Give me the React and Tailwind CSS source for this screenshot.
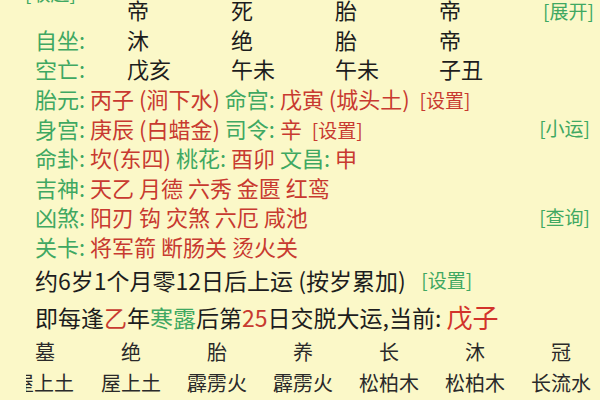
import React from "react";

const font = { fontFamily: '"Noto Sans CJK SC", "Noto Sans", sans-serif' };

const columns = [
  { label: "", cells: ["帝", "死", "胎", "帝"], right: "[展开]" },
  { label: "自坐:", cells: ["沐", "绝", "胎", "帝"] },
  { label: "空亡:", cells: ["戊亥", "午未", "午未", "子丑"] },
];

const bottom = [
  ["墓", "屋上土"],
  ["绝", "屋上土"],
  ["胎", "霹雳火"],
  ["养", "霹雳火"],
  ["长", "松柏木"],
  ["沐", "松柏木"],
  ["冠", "长流水"],
];

function Label({ children }) {
  return <span className="text-[#3fa862]">{children}</span>;
}

function Red({ children }) {
  return <span className="text-[#c83a30]">{children}</span>;
}

function Link({ children, red }) {
  return (
    <span className={`text-[19px] whitespace-nowrap ${red ? "text-[#c83a30]" : "text-[#3fa862]"}`}>{children}</span>
  );
}

function Row({ children, right }) {
  return (
    <div className="flex items-center h-[29.6px] pl-[35px] pr-[10px]">
      <div className="flex-1 whitespace-nowrap">{children}</div>
      {right && <Link>{right}</Link>}
    </div>
  );
}

export default function App() {
  return (
    <div className="w-[600px] h-[400px] overflow-hidden bg-[#fbf8c8] text-[22px] text-[#1d1d1d]" style={font}>
      <div className="mt-[-5px]">
        {columns.map((r, i) => (
          <div key={i} className="flex items-center h-[29.6px] pl-[35px] pr-[10px]">
            <div className="w-[92px] shrink-0 relative whitespace-nowrap">
              {i === 0 ? (
                <span className="relative -top-[18px] -left-[10px] text-[19px] text-[#3fa862]">[收起]</span>
              ) : (
                <Label>{r.label}</Label>
              )}
            </div>
            {r.cells.map((c, j) => (
              <div key={j} className="w-[104px] shrink-0">
                {c}
              </div>
            ))}
            <div className="flex-1 text-right whitespace-nowrap">{r.right && <Link>{r.right}</Link>}</div>
          </div>
        ))}
        <Row>
          <Label>胎元:</Label> <Red>丙子 (涧下水)</Red> <Label>命宫:</Label> <Red>戊寅 (城头土)</Red>&nbsp;&nbsp;
          <Link red>[设置]</Link>
        </Row>
        <Row right="[小运]">
          <Label>身宫:</Label> <Red>庚辰 (白蜡金)</Red> <Label>司令:</Label> <Red>辛</Red>&nbsp;&nbsp;
          <Link red>[设置]</Link>
        </Row>
        <Row>
          <Label>命卦:</Label> <Red>坎(东四)</Red> <Label>桃花:</Label> <Red>酉卯</Red>{" "}
          <Label>文昌:</Label> <Red>申</Red>
        </Row>
        <Row>
          <Label>吉神:</Label> <Red>天乙 月德 六秀 金匮 红鸾</Red>
        </Row>
        <Row right="[查询]">
          <Label>凶煞:</Label> <Red>阳刃 钩 灾煞 六厄 咸池</Red>
        </Row>
        <Row>
          <Label>关卡:</Label> <Red>将军箭 断肠关 烫火关</Red>
        </Row>
      </div>
      <div className="flex items-center h-[37px] pl-[35px] whitespace-nowrap text-[23px]">
        约6岁1个月零12日后上运 (按岁累加)&nbsp;&nbsp;&nbsp;<Link>[设置]</Link>
      </div>
      <div className="flex items-center h-[37px] pl-[35px] whitespace-nowrap text-[23px]">
        即每逢<Red>乙</Red>年<Label>寒露</Label>后第<Red>25</Red>日交脱大运,当前:&nbsp;
        <span className="text-[26px] text-[#d2332b]">戊子</span>
      </div>
      <div className="flex pl-[2px] text-[20px] text-[#2a2a2a]">
        {bottom.map(([a, b], i) => (
          <div key={i} className="w-[86px] shrink-0 flex flex-col items-center">
            <div className="h-[33px] flex items-center">{a}</div>
            <div className="h-[30px] flex items-center">
              {i === 0 ? (
                <div className="w-[48px] overflow-hidden flex justify-end ml-[10px]">
                  <span className="shrink-0">{b}</span>
                </div>
              ) : (
                b
              )}
            </div>
          </div>
        ))}
      </div>
    </div>
  );
}
